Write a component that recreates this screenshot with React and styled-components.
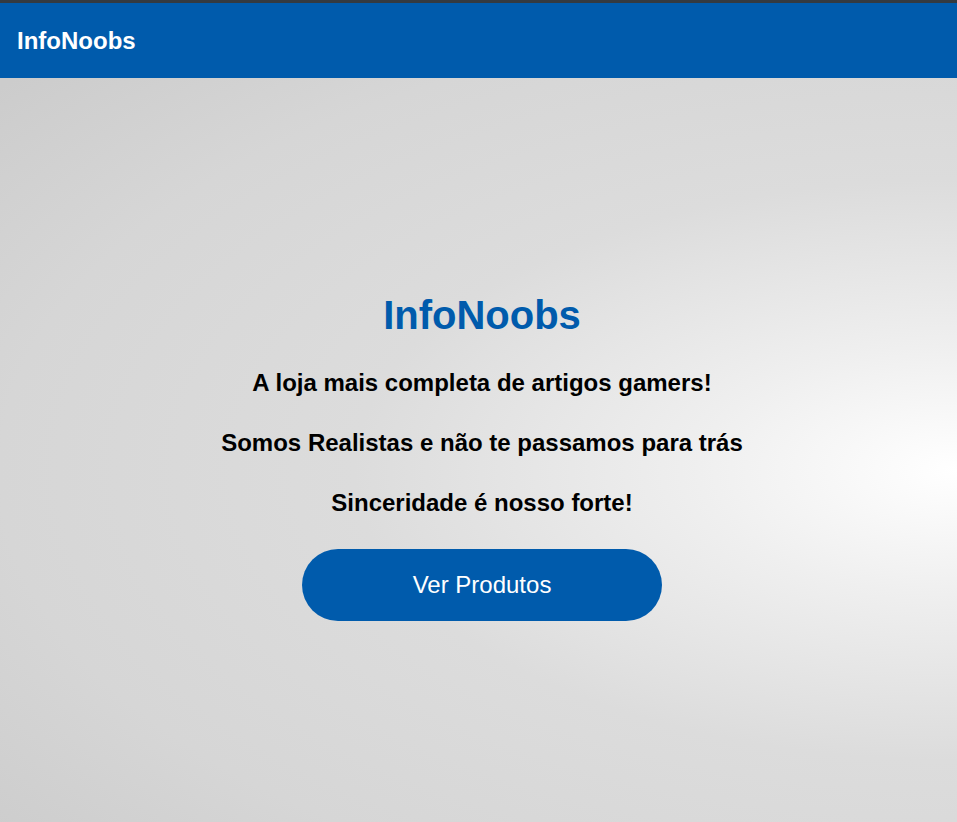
import styled, { createGlobalStyle } from "styled-components";

const GlobalStyle = createGlobalStyle`
  html, body {
    margin: 0;
    padding: 0;
  }
  body {
    font-family: "Liberation Sans", Arial, sans-serif;
    background: #ccc;
  }
`;

const Page = styled.div`
  display: flex;
  flex-direction: column;
  min-height: 100vh;
  background: radial-gradient(
    ellipse 957px 461px at 100% 470px,
    #ffffff 0%,
    #efefef 27%,
    #dcdcdc 63%,
    #d6d6d6 100%,
    #cccccc 130%
  );
`;

const Header = styled.header`
  display: flex;
  align-items: center;
  height: 75px;
  padding: 0 17px;
  background: #005bac;
  border-top: 3px solid #343a40;
`;

const Logo = styled.h1`
  margin: 0;
  font-size: 24px;
  font-weight: 700;
  color: #fff;
`;

const Hero = styled.main`
  flex: 1;
  display: flex;
  flex-direction: column;
  align-items: center;
  justify-content: center;
  padding: 13px 0 0 7px;
  text-align: center;
`;

const Title = styled.h2`
  margin: 0 0 31px;
  font-size: 40px;
  line-height: 46px;
  font-weight: 700;
  color: #005bac;
`;

const Line = styled.p`
  margin: 0 0 32px;
  font-size: 24px;
  line-height: 28px;
  font-weight: 700;
  color: #000;
`;

const Button = styled.button`
  width: 360px;
  height: 72px;
  border: none;
  border-radius: 36px;
  background: #005bac;
  color: #fff;
  font-family: inherit;
  font-size: 24px;
  cursor: pointer;
`;

export default function App() {
  return (
    <>
      <GlobalStyle />
      <Page>
        <Header>
          <Logo>InfoNoobs</Logo>
        </Header>
        <Hero>
          <Title>InfoNoobs</Title>
          <Line>A loja mais completa de artigos gamers!</Line>
          <Line>Somos Realistas e não te passamos para trás</Line>
          <Line>Sinceridade é nosso forte!</Line>
          <Button>Ver Produtos</Button>
        </Hero>
      </Page>
    </>
  );
}
